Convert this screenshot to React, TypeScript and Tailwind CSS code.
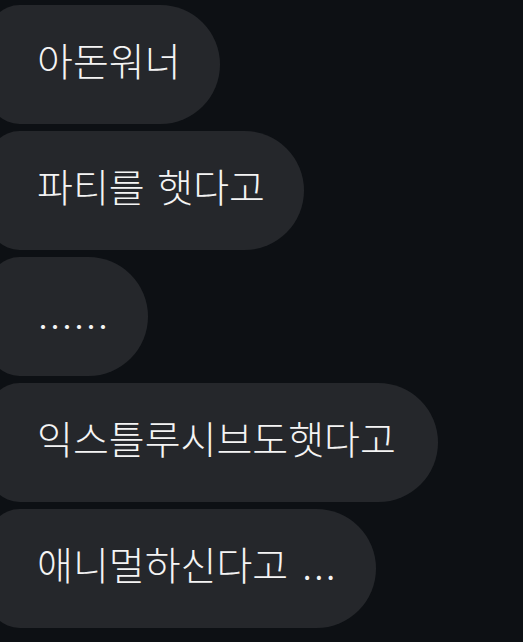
import React from "react";

export default function App() {
  const bubble =
    "ml-[-12px] w-fit h-[119px] shrink-0 flex items-center bg-[#25272b] rounded-l-[32px] rounded-r-[60px] pl-[49px] pr-[39px]";
  const txt = "text-[39px] font-light leading-none text-[#f4f4f4] whitespace-nowrap pb-[10px]";
  return (
    <div
      className="w-[523px] h-[642px] overflow-hidden bg-[#0d1014] flex flex-col gap-[7px] pt-[5px]"
      style={{ fontFamily: '"Noto Sans CJK KR", "Noto Sans", sans-serif' }}
    >
      <div className={bubble}>
        <span className={txt}>아돈워너</span>
      </div>
      <div className={bubble}>
        <span className={`${txt} [word-spacing:4px]`}>파티를 햇다고</span>
      </div>
      <div className={bubble}>
        <span className="text-[36px] font-light leading-none text-[#f4f4f4] whitespace-nowrap pt-[16px]">……</span>
      </div>
      <div className={`${bubble} pr-[42px]`}>
        <span className={txt}>익스틀루시브도햇다고</span>
      </div>
      <div className={`${bubble} pr-[37px]`}>
        <span className={txt}>
          애니멀하신다고<span className="tracking-[2px] ml-[14px]">...</span>
        </span>
      </div>
    </div>
  );
}
